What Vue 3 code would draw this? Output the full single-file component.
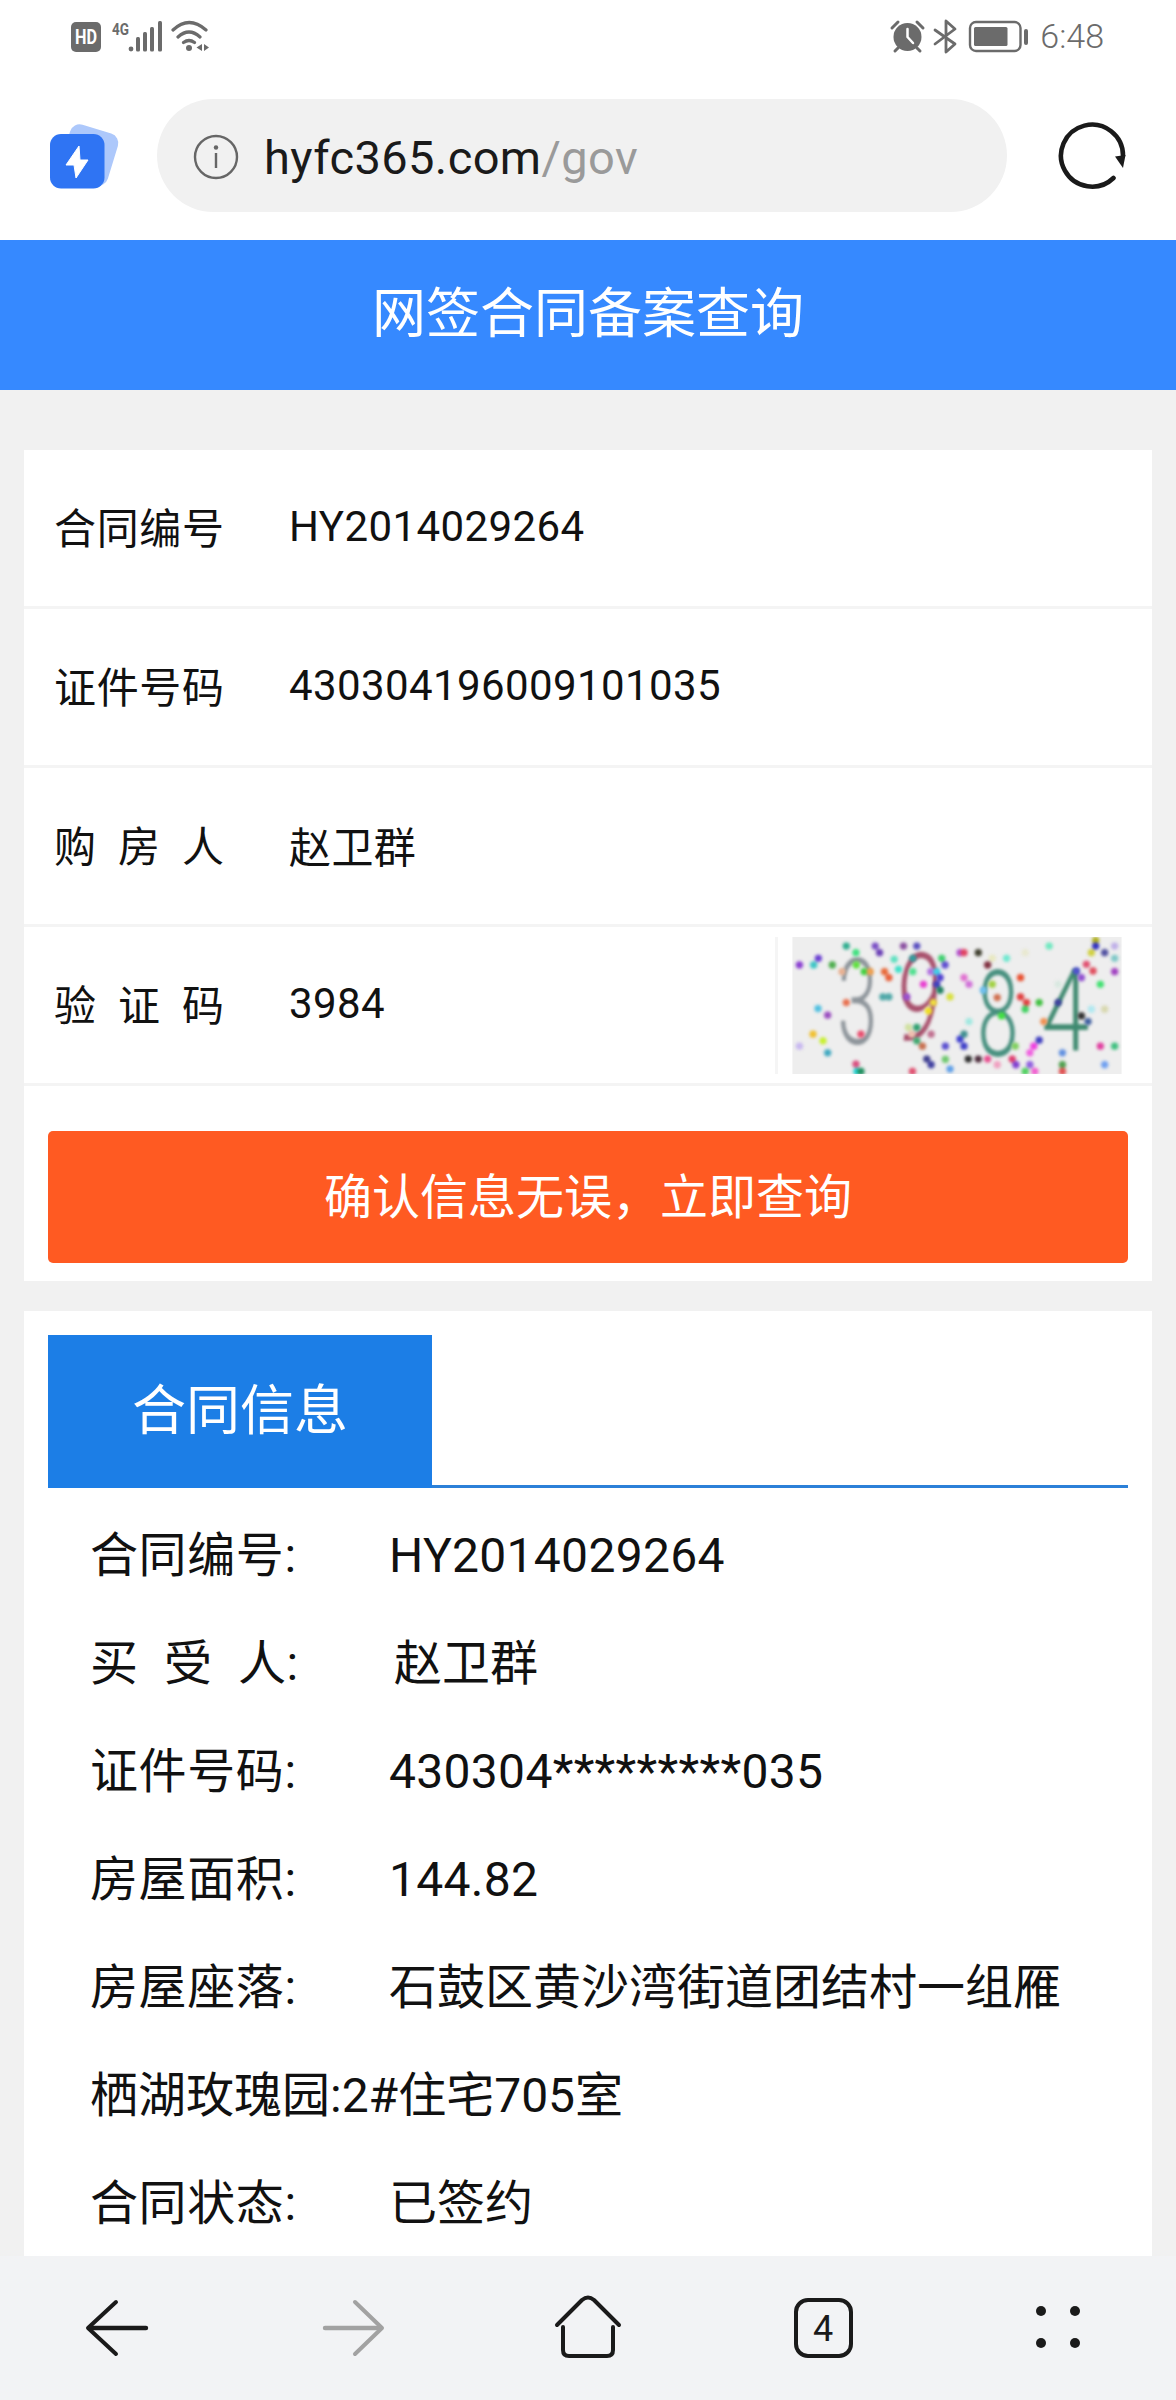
<script setup>
const confirmText = '确认信息无误\uFF0C立即查询'

const rows = [
  { label: '合同编号', value: 'HY2014029264' },
  { label: '证件号码', value: '430304196009101035' },
  { label: '购房人', value: '赵卫群' }
]

const infoBefore = [
  { k: '合同编号:', v: 'HY2014029264', latin: true }
]
const infoAfter = [
  { k: '证件号码:', v: '430304*********035', latin: true },
  { k: '房屋面积:', v: '144.82', latin: true },
  { k: '房屋座落:', v: '石鼓区黄沙湾街道团结村一组雁栖湖玫瑰园:2#住宅705室', latin: false }
]

const dots = [
  [117,192,'#8a3fd1'],[174,172,'#6a3fd1'],[160,192,'#3fc5c5'],[216,192,'#4fae4f'],[258,135,'#2fae8f'],[287,155,'#3fe07f'],
  [345,135,'#7a4fc5'],[358,155,'#6a3fb5'],[288,192,'#5fe03f'],[312,212,'#3fd03f'],[330,212,'#f0a050'],[245,212,'#e8b090'],
  [373,212,'#e86a3a'],[386,230,'#e8603a'],[368,288,'#4fa8a8'],[386,288,'#4fa8a8'],[258,305,'#e8704f'],[173,323,'#4fbfe0'],
  [202,343,'#9a4fc0'],[158,400,'#f0c030'],[188,420,'#c8f030'],[202,456,'#3fa8c0'],[117,436,'#c8b8f0'],[302,400,'#e84f6f'],
  [287,490,'#d84f7f'],[290,512,'#20d0d0'],[302,512,'#1f8f5f'],[430,135,'#8a4fa0'],[470,135,'#5a4fc0'],[402,175,'#5fe0c0'],
  [415,205,'#3fe0c8'],[458,172,'#2f9f9f'],[458,212,'#4fe08f'],[490,250,'#e83fd0'],[512,212,'#b070e0'],[530,212,'#40d0e8'],
  [545,172,'#3fd06f'],[555,192,'#5f4fd0'],[540,230,'#5040d0'],[530,250,'#4040c0'],[540,268,'#208060'],[570,288,'#d8e040'],
  [440,288,'#9a50d0'],[520,305,'#f0e040'],[505,330,'#f0e020'],[470,380,'#2f9f6f'],[445,380,'#d0e0a0'],[455,400,'#f0c0b0'],
  [470,420,'#3fa86f'],[487,436,'#c87050'],[513,400,'#c07090'],[556,436,'#5a4fd0'],[600,415,'#4040d0'],[612,436,'#4040c8'],
  [612,400,'#409090'],[627,362,'#a0e8e0'],[500,475,'#404090'],[513,492,'#4040a0'],[556,476,'#70c870'],[570,505,'#60a0e8'],
  [457,512,'#e05070'],[625,475,'#303030'],[655,475,'#503040'],[683,475,'#e85090'],[712,492,'#f0a0c0'],[757,475,'#e04070'],
  [768,492,'#8040d0'],[600,155,'#b050d0'],[612,155,'#e04060'],[655,155,'#404030'],[683,192,'#803040'],[697,172,'#e8e8c0'],
  [740,172,'#70e8d0'],[612,230,'#e070d0'],[627,250,'#d070d8'],[670,268,'#70c0f0'],[697,250,'#a0d040'],[712,290,'#d07050'],
  [725,345,'#40e040'],[782,230,'#e85030'],[782,288,'#e04040'],[800,305,'#e04040'],[796,325,'#40d060'],[838,305,'#40c040'],
  [766,436,'#80d060'],[838,418,'#4040c0'],[822,436,'#f040e0'],[810,456,'#f060e0'],[810,492,'#9060e0'],[825,512,'#f060d0'],
  [796,512,'#50d060'],[852,362,'#f09050'],[895,305,'#4040a0'],[908,456,'#6090e0'],[908,492,'#50a050'],[908,512,'#e05050'],
  [796,155,'#e8e8d0'],[868,135,'#70e8c0'],[950,210,'#5050d0'],[965,230,'#9050d0'],[980,190,'#e05070'],[1000,210,'#e05060'],
  [1022,250,'#40e070'],[1008,118,'#b0b020'],[1008,135,'#3030c0'],[1035,155,'#5050a0'],[995,155,'#d0d040'],[1065,135,'#c0b0e8'],
  [1065,172,'#80c8c8'],[1065,212,'#a040c0'],[965,345,'#303030'],[985,362,'#4060a0'],[995,325,'#b0e8f0'],[1035,325,'#d8d8b0'],
  [1022,436,'#e040a0'],[1065,436,'#40c080'],[1035,492,'#70a0f0'],[895,250,'#d8e8e0']
]
</script>

<template>
  <div class="phone">
    <div class="status">
      <svg class="st-left" viewBox="71 18 140 36" width="140" height="36">
        <rect x="71" y="22" width="30" height="30" rx="5" fill="#6b6b6b" />
        <text x="75" y="44" class="st-hd" textLength="22" lengthAdjust="spacingAndGlyphs">HD</text>
        <text x="112" y="35" class="st-4g" textLength="17" lengthAdjust="spacingAndGlyphs">4G</text>
        <circle cx="131" cy="49" r="2.4" fill="#6b6b6b" />
        <rect x="136" y="37" width="4" height="14.5" rx="1.5" fill="#6b6b6b" />
        <rect x="143" y="32" width="4" height="19.5" rx="1.5" fill="#6b6b6b" />
        <rect x="150" y="27" width="4" height="24.5" rx="1.5" fill="#6b6b6b" />
        <rect x="158" y="21" width="4" height="30.5" rx="1.5" fill="#6b6b6b" />
        <path d="M173 30Q189 15 206 30M178 37Q189 27 200 37M183.500 42.500Q189 38.500 194.500 42.500" fill="none" stroke="#6b6b6b" stroke-width="3.200" stroke-linecap="round" />
        <circle cx="189" cy="48" r="3" fill="#6b6b6b" />
        <path d="M202 44V51L196.500 47.500ZM204 44V51L209 47.500Z" fill="#6b6b6b" />
      </svg>
      <div class="st-right">
        <svg viewBox="888 18 142 36" width="142" height="36">
          <path d="M891 28L897 22M922 28L916 22M894 51L897 48M919 51L916 48" stroke="#6b6b6b" stroke-width="3" stroke-linecap="round" fill="none" />
          <circle cx="906.500" cy="37" r="14" fill="#6b6b6b" />
          <path d="M906.500 29V37L912 43" stroke="#fff" stroke-width="2.500" fill="none" stroke-linecap="round" stroke-linejoin="round" />
          <path d="M934 30L954 44L945 52V21L954 29L934 44" fill="none" stroke="#6b6b6b" stroke-width="2.800" stroke-linejoin="round" stroke-linecap="round" />
          <rect x="969" y="22" width="50.500" height="29" rx="6" fill="none" stroke="#6b6b6b" stroke-width="2.400" />
          <rect x="973" y="27" width="33.500" height="19" rx="1.500" fill="#6b6b6b" />
          <rect x="1023" y="29" width="4" height="16" rx="2" fill="#6b6b6b" />
        </svg>
        <span class="time">6:48</span>
      </div>
    </div>

    <div class="browser">
      <svg class="logo" viewBox="44 118 80 76" width="80" height="76">
        <rect x="64" y="128" width="50" height="54" rx="10" fill="#adc8fb" transform="rotate(17 89 155)" />
        <rect x="50" y="134" width="54.500" height="54.500" rx="11" fill="#2f74f3" />
        <path d="M79 146L66 165H74L76 178L88 160H80Z" fill="#fff" stroke="#fff" stroke-width="1" stroke-linejoin="round" />
      </svg>
      <div class="pill">
        <svg class="info-icon" viewBox="193 133 46 46" width="46" height="46">
          <circle cx="216" cy="156" r="21" fill="none" stroke="#666" stroke-width="2.400" />
          <circle cx="216" cy="146.500" r="2.200" fill="#666" />
          <rect x="214.800" y="152" width="2.400" height="15" fill="#666" />
        </svg>
        <span class="url">hyfc365.com<span class="url-path">/gov</span></span>
      </div>
      <svg class="reload" viewBox="1055 119 74 74" width="74" height="74">
        <path d="M1113.500 178A31 31 0 1 1 1123 156" fill="none" stroke="#1a1a1a" stroke-width="4.600" stroke-linecap="round" />
        <path d="M1115 156.500L1125.500 155L1123 168Z" fill="#1a1a1a" />
      </svg>
    </div>

    <div class="page">
      <header class="title">网签合同备案查询</header>
      <div class="body">
        <section class="card form">
          <div v-for="r in rows" :key="r.label" class="row">
            <span class="row-label">{{ r.label }}</span>
            <span class="row-value">{{ r.value }}</span>
          </div>
          <div class="row">
            <span class="row-label">验证码</span>
            <span class="row-value">3984</span>
            <div class="captcha-wrap">
              <svg class="captcha" viewBox="96 108 990 412" width="330" height="137">
                <rect x="96" y="108" width="990" height="412" fill="#eeeeee" />
                <g class="cap-digits">
                  <text transform="translate(232 430) scale(.6 1)" class="cap-d" fill="#8e959b">3</text>
                  <text transform="translate(395 412) rotate(6) scale(.68 1.03)" class="cap-d" fill="#a8506c">9</text>
                  <text transform="translate(652 466) scale(.62 1.01)" class="cap-d" fill="#47907f">8</text>
                  <text transform="translate(845 450) scale(.72 .96)" class="cap-d" fill="#3f8a70">4</text>
                </g>
                <g class="cap-dots">
                  <circle v-for="(d, i) in dots" :key="i" :cx="d[0]" :cy="d[1]" r="11" :fill="d[2]" />
                </g>
              </svg>
            </div>
          </div>
          <button class="confirm" type="button">{{ confirmText }}</button>
        </section>

        <section class="card detail">
          <div class="tabs">
            <div class="tab">合同信息</div>
          </div>
          <div class="info">
            <p v-for="i in infoBefore" :key="i.k" class="line"><span class="k">{{ i.k }}</span><span :class="{ latin: i.latin }">{{ i.v }}</span></p>
            <p class="line"><span class="k buyer"><span class="sp">买受</span>人:</span>赵卫群</p>
            <p v-for="i in infoAfter" :key="i.k" class="line"><span class="k">{{ i.k }}</span><span :class="{ latin: i.latin }">{{ i.v }}</span></p>
            <p class="line"><span class="k">合同状态:</span>已签约</p>
          </div>
        </section>
      </div>
    </div>

    <nav class="bottom">
      <svg viewBox="0 2256 1176 144" width="1176" height="144">
        <path d="M116 2302L88 2328L116 2354" fill="none" stroke="#1a1a1a" stroke-width="4" stroke-linecap="round" stroke-linejoin="round" />
        <path d="M90 2328H146" stroke="#1a1a1a" stroke-width="4.400" stroke-linecap="round" />
        <path d="M355 2302L382 2328L355 2354" fill="none" stroke="#a2a2a2" stroke-width="4" stroke-linecap="round" stroke-linejoin="round" />
        <path d="M325 2328H380" stroke="#a2a2a2" stroke-width="4.400" stroke-linecap="round" />
        <path d="M557 2325L582 2300Q588 2295 594 2300L619 2325" fill="none" stroke="#1a1a1a" stroke-width="4" stroke-linecap="round" stroke-linejoin="round" />
        <path d="M563 2327V2350Q563 2356 569 2356H607Q613 2356 613 2350V2327" fill="none" stroke="#1a1a1a" stroke-width="4" stroke-linecap="round" />
        <rect x="796" y="2300" width="55" height="56" rx="12" fill="none" stroke="#1a1a1a" stroke-width="4" />
        <text x="823" y="2341" class="tab-num" text-anchor="middle">4</text>
        <circle cx="1041" cy="2311" r="5" fill="#1a1a1a" />
        <circle cx="1075" cy="2311" r="5" fill="#1a1a1a" />
        <circle cx="1041" cy="2343" r="5" fill="#1a1a1a" />
        <circle cx="1075" cy="2343" r="5" fill="#1a1a1a" />
      </svg>
    </nav>
  </div>
</template>

<style scoped>
.phone {
  width: 1176px;
  height: 2400px;
  display: flex;
  flex-direction: column;
  overflow: hidden;
  background: #fff;
  font-family: Roboto, "Noto Sans CJK SC", sans-serif;
  color: #111;
}
.status {
  height: 80px;
  flex: none;
  display: flex;
  justify-content: space-between;
  align-items: flex-start;
  padding: 18px 0 0 71px;
  box-sizing: border-box;
}
.status svg { display: block; }
.st-right {
  display: flex;
  align-items: center;
  gap: 9px;
  padding-right: 72px;
}
.time {
  font-size: 34px;
  font-weight: 300;
  line-height: 36px;
  color: #6b6b6b;
}
.st-hd { font: 700 20px Roboto, sans-serif; fill: #fff; }
.st-4g { font: 700 16px Roboto, sans-serif; fill: #6b6b6b; }
.browser {
  height: 160px;
  flex: none;
  display: flex;
  align-items: flex-start;
  padding: 19px 0 0 44px;
  box-sizing: border-box;
}
.logo { flex: none; margin: 19px 33px 0 0; display: block; }
.pill {
  width: 850px;
  height: 113px;
  flex: none;
  border-radius: 57px;
  background: #f1f1f1;
  display: flex;
  align-items: center;
  padding-left: 36px;
  box-sizing: border-box;
}
.info-icon { flex: none; margin: 2px 25px 0 0; display: block; }
.url {
  font-size: 47px;
  line-height: 56px;
  letter-spacing: 0.4px;
  color: #1a1a1a;
  padding-top: 5px;
}
.url-path { color: #9a9a9a; }
.reload { flex: none; margin: 20px 0 0 48px; display: block; }
.page {
  flex: 1;
  min-height: 0;
  overflow: hidden;
  background: #f1f1f1;
}
.title {
  height: 150px;
  background: #3689ff;
  color: #fff;
  font-size: 54px;
  line-height: 150px;
  text-align: center;
}
.body {
  padding: 60px 24px 0;
  display: flex;
  flex-direction: column;
  gap: 30px;
}
.card { background: #fff; }
.form { padding-bottom: 18px; }
.row {
  height: 159px;
  box-sizing: border-box;
  border-bottom: 3px solid #f4f4f4;
  display: flex;
  align-items: center;
  padding-left: 30px;
  font-size: 42px;
}
.row-label {
  width: 170px;
  flex: none;
  margin: 0 65px 6px 0;
  text-align: justify;
  text-align-last: justify;
  word-break: break-all;
  color: #111;
}
.row-value {
  color: #111;
  letter-spacing: 0.4px;
  margin-bottom: 4px;
}
.captcha-wrap {
  margin-left: auto;
  margin-right: 30px;
  border-left: 3px solid #f5f5f5;
  padding-left: 14px;
}
.captcha { display: block; }
.cap-d { font: 300 360px Roboto, sans-serif; }
.cap-digits { filter: blur(5px); }
.cap-dots { filter: blur(4px); }
.confirm {
  display: block;
  width: 1080px;
  height: 132px;
  margin: 45px 0 0 24px;
  border: 0;
  border-radius: 5px;
  background: #ff5a22;
  color: #fff;
  font-family: inherit;
  font-size: 48px;
  padding: 0 0 8px;
}
.detail { padding: 24px 24px 40px; }
.tabs {
  border-bottom: 3px solid #2b80d8;
  height: 153px;
  box-sizing: border-box;
}
.tab {
  width: 384px;
  height: 153px;
  background: #1c7ee6;
  color: #fff;
  font-size: 54px;
  line-height: 153px;
  text-align: center;
}
.info {
  padding: 14px 28px 0 42px;
  font-size: 48px;
  line-height: 108px;
}
.line { margin: 0; }
.k {
  display: inline-block;
  width: 299px;
  letter-spacing: 0.6px;
}
.k.buyer { width: 304px; }
.sp { letter-spacing: 26px; }
.latin { letter-spacing: 0.3px; }
.bottom {
  height: 144px;
  flex: none;
  background: #f2f3f5;
}
.bottom svg { display: block; }
.tab-num { font: 400 36px Roboto, sans-serif; fill: #1a1a1a; }
</style>

<style>
html, body { margin: 0; background: #fff; }
</style>
